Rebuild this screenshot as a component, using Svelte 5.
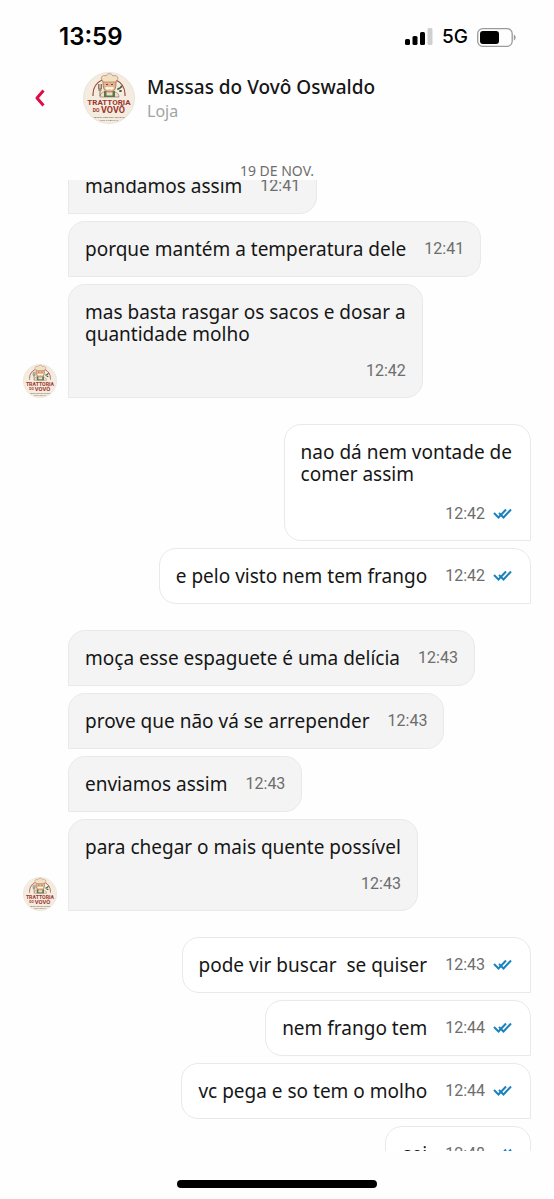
<script>
  const groups = [
    {
      mine: false,
      messages: [
        { text: 'mandamos assim', time: '12:41' },
        { text: 'porque mantém a temperatura dele', time: '12:41' },
        { text: 'mas basta rasgar os sacos e dosar a\nquantidade molho', time: '12:42', tall: true }
      ]
    },
    {
      mine: true,
      messages: [
        { text: 'nao dá nem vontade de\ncomer assim', time: '12:42', tall: true },
        { text: 'e pelo visto nem tem frango', time: '12:42' }
      ]
    },
    {
      mine: false,
      messages: [
        { text: 'moça esse espaguete é uma delícia', time: '12:43' },
        { text: 'prove que não vá se arrepender', time: '12:43' },
        { text: 'enviamos assim', time: '12:43' },
        { text: 'para chegar o mais quente possível', time: '12:43', tall: true }
      ]
    },
    {
      mine: true,
      messages: [
        { text: 'pode vir buscar  se quiser', time: '12:43' },
        { text: 'nem frango tem', time: '12:44' },
        { text: 'vc pega e so tem o molho', time: '12:44' },
        { text: 'sei', time: '12:48' }
      ]
    }
  ]
</script>

{#snippet logo()}
  <svg class="logo" viewBox="0 0 52 52" role="img" aria-label="Trattoria do Vovô">
    <circle cx="26" cy="26" r="25.5" fill="#f5ece0" stroke="#ebe3da" stroke-width="1" />
    <path d="M10 24v-2a16 16 0 0 1 9-14M33 8a16 16 0 0 1 9 14v2" fill="none" stroke="#a04a3f" stroke-width="1.2" />
    <path d="M17 25c0-4 3-6 9-6s10 2 10 6z" fill="#efe0c8" stroke="#8a6a50" stroke-width=".6" />
    <path d="M21 19h11v6H21z" fill="#58794c" />
    <path d="M23.500 19.500h6v4h-6z" fill="#eedfc4" />
    <path d="M20 9c0 6 0 11 6.500 11S33 15 33 9z" fill="#e5b48d" stroke="#8f5e42" stroke-width=".7" />
    <path d="M20 9c-4-3 0-7 3-5 1-3 6-3 7 0 4-2 7 3 3 5v1H20z" fill="#f3dfc5" stroke="#a9805f" stroke-width=".7" />
    <path d="M22 16c2-2 3 0 4.500-1 1.500 1 3-1 4.500 1-1 2-3 2-4.500 1-1.500 1-3 1-4.500-1z" fill="#fff8ee" />
    <path d="M23 12.500h2M28 12.500h2" stroke="#65402d" stroke-width=".9" />
    <path d="M15.500 12v5M17 12v5M18.500 12v5M17 16v8M15 18h4" fill="none" stroke="#75563f" stroke-width=".8" />
    <path d="M35 17l2-1M37 19l1 0M38 15l.5-.5" stroke="#48613d" stroke-width="1.800" stroke-linecap="round" />
    <text x="26" y="33" font-size="8" font-weight="700" fill="#9c352e">TRATTORIA</text>
    <text x="13" y="39.500" font-size="5" font-weight="700" fill="#9c352e">DO</text>
    <text x="30" y="41" font-size="9" font-weight="700" fill="#9c352e">VOVÔ</text>
    <text x="26" y="45.500" font-size="2.400" fill="#6f6a55">PARA A TRADIÇÃO ITALIANA</text>
    <text x="26" y="48.500" font-size="2.400" fill="#6f6a55">COM O CARINHO</text>
  </svg>
{/snippet}

<div class="screen">
  <div class="status">
    <span class="clock">13:59</span>
    <div class="signals">
      <svg width="28" height="18" viewBox="0 0 28 18" aria-hidden="true">
        <rect x="0" y="11" width="5" height="6" rx="1.500" />
        <rect x="7.500" y="8" width="5" height="9" rx="1.500" />
        <rect x="15" y="4" width="5" height="13" rx="1.500" />
        <rect x="22.500" y="0" width="5" height="17" rx="1.500" fill="#cfcfcf" />
      </svg>
      <span class="network">5G</span>
      <svg width="40" height="19" viewBox="0 0 40 19" aria-hidden="true">
        <rect x=".7" y=".7" width="34.500" height="17.600" rx="5" fill="none" stroke="#9b9b9b" stroke-width="1.300" />
        <rect x="3" y="3" width="19" height="13" rx="3" />
        <path d="M36.800 6.500c2.400.8 2.400 5.200 0 6z" fill="#9b9b9b" />
      </svg>
    </div>
  </div>

  <header>
    <button class="back" aria-label="Voltar">
      <svg width="12" height="18" viewBox="0 0 12 18" aria-hidden="true">
        <path d="M9.500 1.500L3 9l6.500 7.500" fill="none" stroke="#dc0d49" stroke-width="3" stroke-linejoin="round" />
      </svg>
    </button>
    <div class="store-logo">{@render logo()}</div>
    <div class="store">
      <h1>Massas do Vovô Oswaldo</h1>
      <p>Loja</p>
    </div>
  </header>

  <p class="date">19 DE NOV.</p>

  <main>
    {#each groups as group}
      <section class="group" class:mine={group.mine}>
        {#if !group.mine}
          <div class="avatar">{@render logo()}</div>
        {/if}
        <div class="messages">
          {#each group.messages as message}
            <div class="bubble" class:tall={message.tall}>
              <p>{message.text}</p>
              <div class="meta">
                <time>{message.time}</time>
                {#if group.mine}
                  <svg width="19" height="12" viewBox="0 0 19 12" role="img" aria-label="Lida">
                    <path d="M1 5l4.500 4.500 7.500-8M6 5l4.500 4.500 7.500-8" fill="none" stroke="#1b82be" stroke-width="2" />
                  </svg>
                {/if}
              </div>
            </div>
          {/each}
        </div>
      </section>
    {/each}
  </main>

  <footer><span class="home-bar"></span></footer>
</div>

<style>
  :global(body) {
    background: #fefefe;
  }
  .screen {
    display: flex;
    flex-direction: column;
    height: 100vh;
    color: #161616;
    font-family: 'Noto Sans', 'Open Sans', sans-serif;
  }
  p,
  h1 {
    margin: 0;
  }
  .status {
    display: flex;
    flex: none;
    justify-content: space-between;
    align-items: center;
    padding: 21px 37px 0 59px;
    color: #000;
    font-family: Inter, Roboto, sans-serif;
    line-height: 32px;
  }
  .clock {
    font-size: 24px;
    font-weight: 600;
  }
  .signals {
    display: flex;
    align-items: center;
    gap: 9px;
  }
  .network {
    font-size: 19px;
    font-weight: 500;
  }
  header {
    display: flex;
    flex: none;
    align-items: center;
    padding: 19px 23px 0;
  }
  .back {
    display: flex;
    justify-content: center;
    width: 34px;
    padding: 0;
    border: 0;
    background: none;
    cursor: pointer;
  }
  .logo {
    display: block;
    width: 100%;
    font-family: Roboto, sans-serif;
    text-anchor: middle;
  }
  .store-logo {
    width: 52px;
    margin: 0 12px 0 26px;
  }
  h1 {
    font-size: 19px;
    font-weight: 500;
    line-height: 26px;
  }
  .store p {
    color: #a3a3a3;
    font-size: 16px;
    line-height: 22px;
  }
  .date {
    flex: none;
    padding-top: 38px;
    color: #6d6d6d;
    font-size: 14px;
    line-height: 18px;
    text-align: center;
  }
  main {
    display: flex;
    flex: 1;
    flex-direction: column;
    gap: 26px;
    min-height: 0;
    padding: 0 23px;
    overflow: hidden;
  }
  .group {
    display: flex;
    flex: none;
    align-items: flex-end;
    gap: 11px;
  }
  /* the thread is scrolled part of a bubble past its top */
  .group:first-child {
    margin-top: -22px;
  }
  .avatar {
    flex: none;
    width: 34px;
  }
  .messages {
    display: flex;
    flex: 1;
    flex-direction: column;
    align-items: flex-start;
    gap: 7px;
  }
  .mine .messages {
    align-items: flex-end;
  }
  .bubble {
    display: flex;
    gap: 18px;
    padding: 16px;
    border: 1px solid #e9e9e9;
    border-radius: 17px 17px 17px 0;
    background: #f4f4f4;
  }
  .mine .bubble {
    padding-right: 18px;
    border-radius: 17px 17px 0 17px;
    background: #fff;
  }
  .bubble p {
    font-size: 19px;
    line-height: 22px;
    white-space: pre-wrap;
  }
  .meta {
    display: flex;
    align-items: center;
    gap: 8px;
    color: #6d6d6d;
    font-family: Roboto, sans-serif;
    font-size: 16px;
    line-height: 22px;
  }
  .tall {
    flex-direction: column;
    gap: 16px;
  }
  .tall .meta {
    align-self: flex-end;
    line-height: 20px;
  }
  .mine .tall {
    gap: 18px;
  }
  .mine .tall .meta {
    line-height: 21px;
  }
  footer {
    display: flex;
    flex: none;
    justify-content: center;
    padding: 29px 0 11px;
  }
  .home-bar {
    width: 36%;
    height: 8px;
    border-radius: 4px;
    background: #000;
  }
</style>
